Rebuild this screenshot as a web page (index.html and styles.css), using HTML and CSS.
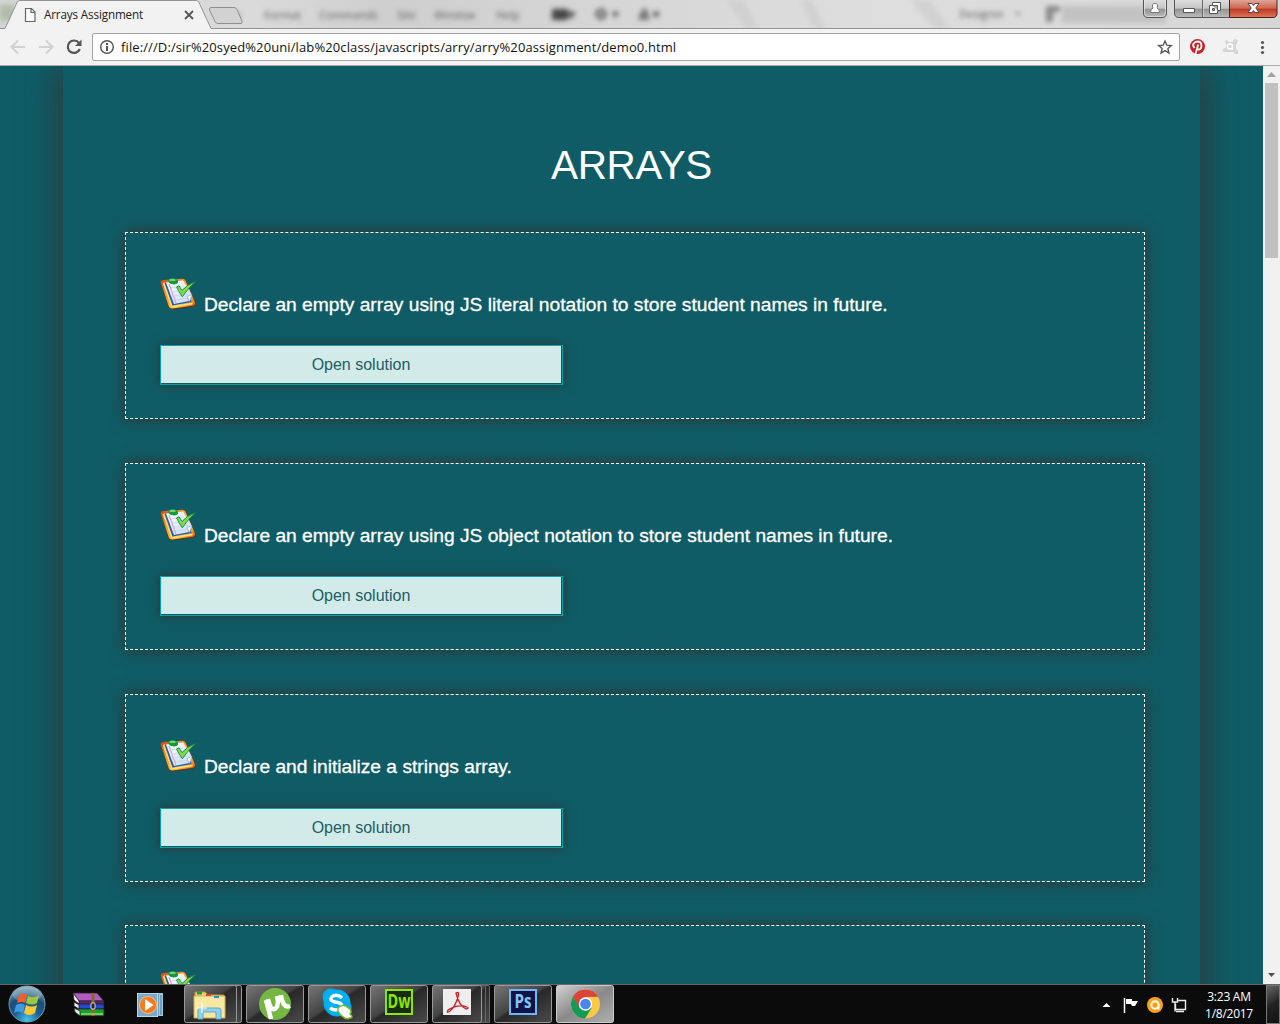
FILE: index.html
```html
<!DOCTYPE html>
<html lang="en">
<head>
<meta charset="utf-8">
<title>Arrays Assignment</title>
<link rel="stylesheet" href="styles.css">
</head>
<body>
<svg class="defs" width="0" height="0">
  <defs>
    <linearGradient id="board" x1="0" y1="0" x2="1" y2="1"><stop offset="0" stop-color="#d93c12"/><stop offset=".3" stop-color="#f78a1c"/><stop offset=".7" stop-color="#ffc63d"/><stop offset="1" stop-color="#d9480f"/></linearGradient>
    <linearGradient id="sheet" x1="0" y1="0" x2="1" y2="1"><stop offset="0" stop-color="#fff"/><stop offset="1" stop-color="#c3d9f8"/></linearGradient>
    <radialGradient id="orb" cx=".5" cy=".95" r=".9"><stop offset="0" stop-color="#42c8f0"/><stop offset=".4" stop-color="#1d5f95"/><stop offset=".7" stop-color="#1c4d75"/><stop offset="1" stop-color="#7aa6bd"/></radialGradient>
    <symbol id="clip" viewBox="0 0 36 34">
      <path d="M1 6.500Q0 4 3 3.500L22 2Q25 1 26 4L35.500 26Q36 29 33.500 29.500L13 32.500Q10 33 8.500 30Z" fill="#6b2a12"/>
      <path d="M.8 5.800Q0 3.700 3 3L22 1.700Q24.500 1.300 25.500 3.500L35 25.500Q35.500 28 33 28.700L12.500 31.500Q10 32 8.800 29.500Z" fill="url(#board)"/>
      <path d="M2.800 6.500L5 5L12.500 29L33 25.500L32 27.500L11.500 30.500Z" fill="#ffe27a"/>
      <path d="M4.500 6L22 3.500L31.500 25L12.500 28.500Z" fill="#2358b5"/>
      <path d="M6 5.500L23 3.200L32 18L29.500 24L14 27Z" fill="url(#sheet)"/>
      <path d="M9 7L16 26" stroke="#dc9be9" stroke-width="1.200"/>
      <path d="M11 11L23 9M12.500 15L26 13M14 19L28 17M15.500 23L28 21" stroke="#bccdf0" stroke-width=".6"/>
      <path d="M27 19.500L32 17.500L29.500 24.500Z" fill="#fff" stroke="#789ed4" stroke-width=".6"/>
      <ellipse cx="13.200" cy="4.300" rx="5" ry="3.100" fill="#18983d" transform="rotate(8 13.200 4.300)"/><ellipse cx="12.500" cy="2.900" rx="3.200" ry="1.200" fill="#6bd873"/>
      <path d="M16.500 10L19 8.800L22 13.500Q27 7.500 35.500 4.800Q28 11 22.300 19.800Q19 15 16.500 10Z" fill="#7bdc4c" stroke="#15883a" stroke-width=".9"/>
    </symbol>
  </defs>
</svg>
<div class="screen">
  <header class="browser">
    <div class="titlebar">
      <svg class="glass" width="1280" height="29" viewBox="0 0 1280 29">
        <defs>
          <linearGradient id="gl" x1="0" x2="1"><stop offset="0" stop-color="#d3d5d3"/><stop offset=".2" stop-color="#dadada"/><stop offset=".3" stop-color="#cfcfcf"/><stop offset=".58" stop-color="#dadada"/><stop offset=".7" stop-color="#dedede"/><stop offset="1" stop-color="#d6d6d6"/></linearGradient>
          <filter id="soft" x="-20%" y="-80%" width="140%" height="260%"><feGaussianBlur stdDeviation="2.500"/></filter>
          <linearGradient id="btn" x2="0" y2="1"><stop offset="0" stop-color="#ddd"/><stop offset=".48" stop-color="#c4c4c4"/><stop offset=".5" stop-color="#929292"/><stop offset="1" stop-color="#bdbdbd"/></linearGradient>
          <linearGradient id="closer" x2="0" y2="1"><stop offset="0" stop-color="#e0a596"/><stop offset=".48" stop-color="#cf6450"/><stop offset=".5" stop-color="#b93620"/><stop offset="1" stop-color="#df7857"/></linearGradient>
        </defs>
        <path fill="url(#gl)" d="M0 0H1280V29H0z"/>
        <g filter="url(#soft)">
          <path d="M726 0H744L758 29H746zM800 0H812L826 29H814zM910 0H930L950 29H935z" fill="#c9c9c9" opacity=".6"/>
          <path d="M0 5H14V20H0z" fill="#adbca9"/>
          <g class="ghost"><text x="232" y="19">rt</text><text x="264" y="19">Format</text><text x="319" y="19">Commands</text><text x="397" y="19">Site</text><text x="434" y="19">Window</text><text x="496" y="19">Help</text><text x="959" y="18">Designer</text></g>
          <path d="M552 9H568V20H552zM567 12H576L571 19zM612 12H619L615 18zM652 12H660L656 18z" fill="#444"/><path d="M1015 12H1021L1018 17z" fill="#999"/>
          <circle cx="601" cy="14" r="4" fill="none" stroke="#666" stroke-width="3.500"/><path d="M638 20Q641 8 645 8Q647 8 650 20z" fill="#777"/>
          <path d="M1046 6H1060V12H1053V22H1046z" fill="#888"/><path d="M1062 6H1166V23H1062z" fill="#c2c2c2"/>
        </g>
        <path d="M0 28.500H5L17 2.500Q18 .5 20 .5H196Q198 .5 199 2.500L211 28.500H1280" fill="none" stroke="#949494"/>
        <path d="M5.500 29L17.500 3Q18 1 20 1H196Q198 1 198.500 3L210.500 29z" fill="#f2f2f2"/>
        <path d="M211 7.500H234Q236 7.500 237 9.500L242 21Q242.500 23.500 241 23.500H218Q216 23.500 215 21.500L209.500 10Q209 7.500 211 7.500z" fill="#d2d2d2" stroke="#8e8e8e"/>
        <path d="M25.500 8.500H31.500L35 12V21.500H25.500zM31 8.500V12.500H35" fill="#fafafa" stroke="#666" stroke-width="1.200"/>
        <path d="M185 11L193 19M193 11L185 19" stroke="#555" stroke-width="1.800"/>
        <path d="M1143.500 0V13Q1143.500 17.500 1148 17.500H1162Q1166.500 17.500 1166.500 13V0" fill="url(#btn)" stroke="#555"/>
        <path d="M1144.500 0V13Q1144.500 16.500 1148 16.500H1162Q1165.500 16.500 1165.500 13V0" fill="none" stroke="#eee" opacity=".6"/>
        <path d="M1174.500 0V13Q1174.500 17.500 1179 17.500H1229.500V0" fill="url(#btn)" stroke="#555"/>
        <path d="M1229.500 0V17.500H1273Q1277 17.500 1277 13V0" fill="url(#closer)" stroke="#50201a"/>
        <path d="M1202.500 0V17" stroke="#666"/><path d="M1203.500 0V17" stroke="#ddd" opacity=".6"/>
        <path d="M1150.500 12.500Q1150.500 8.500 1153 8Q1151 3.500 1155 3.500Q1159 3.500 1157 8Q1159.500 8.500 1159.500 12.500z" fill="#fff" stroke="#777"/>
        <path d="M1183.500 8.500H1194.500V12.500H1183.500z" fill="#fff" stroke="#555"/>
        <path d="M1212.500 2.500H1220.500V10.500H1217.500V13.500H1209.500V5.500H1212.500z" fill="#fff" stroke="#555"/><path d="M1212.500 8.500H1214.500V10.500H1212.500zM1212 5.500H1217.500V10" fill="#aaa" stroke="#555"/>
        <path d="M1248 3.500H1252L1253.500 5.500L1255 3.500H1259L1255.800 8L1259 12.500H1255L1253.500 10.500L1252 12.500H1248L1251.200 8z" fill="#fff" stroke="#574344"/>
      </svg>
      <span class="tab-title">Arrays Assignment</span>
    </div>
    <div class="toolbar">
      <svg class="nav" width="92" height="36" viewBox="0 29 92 36"><path d="M25 47H12M18 40.500L11.500 47L18 53.500M39 47H52M46 40.500L52.500 47L46 53.500" fill="none" stroke="#d2d2d2" stroke-width="2"/><path d="M79 43A6.200 6.200 0 1 0 79.800 49" fill="none" stroke="#555" stroke-width="2.200"/><path d="M81.500 39.500V46H75z" fill="#555"/></svg>
      <div class="address">
        <svg width="28" height="26" viewBox="93 34 28 26"><circle cx="107" cy="47" r="6.300" fill="none" stroke="#555" stroke-width="1.400"/><path d="M106 46H108V51H106zM106 43H108V45H106z" fill="#555"/></svg>
        <span class="url">file:///D:/sir%20syed%20uni/lab%20class/javascripts/arry/arry%20assignment/demo0.html</span>
        <svg class="star" width="28" height="26" viewBox="1151 34 28 26"><path d="M1165 41L1166.800 45.200L1171.300 45.600L1167.900 48.500L1168.900 53L1165 50.600L1161.100 53L1162.100 48.500L1158.700 45.600L1163.200 45.200z" fill="none" stroke="#555" stroke-width="1.400"/></svg>
      </div>
      <svg width="100" height="36" viewBox="1180 29 100 36"><circle cx="1197.500" cy="46.500" r="7.500" fill="#cb2027"/><path d="M1194.500 48C1191 44 1195 41.500 1198 41.500C1203 42 1202 49.500 1198.500 49.500Q1197 49.500 1197 48M1198.200 44.500L1195.500 54" fill="none" stroke="#fff" stroke-width="1.800"/><path d="M1225 41Q1227 39 1229 42L1233 42Q1233 39 1236 39Q1239 40 1237 43L1236 45V49Q1239 51 1238 54Q1235 55 1233 52H1225Q1221 52 1223 49L1227 47z" fill="#d5d5d5"/><circle cx="1230" cy="46.500" r="2.500" fill="none" stroke="#fff" stroke-width="1.500"/><path d="M1232.500 44V50" stroke="#fff" stroke-width="1.200"/><g fill="#555"><circle cx="1262.500" cy="42.500" r="1.600"/><circle cx="1262.500" cy="47.500" r="1.600"/><circle cx="1262.500" cy="52.500" r="1.600"/></g></svg>
    </div>
  </header>
  <main class="viewport">
    <div class="page">
      <section class="container">
        <h1>ARRAYS</h1>
        <article class="card"><div class="question"><svg width="36" height="34"><use href="#clip"/></svg><p>Declare an empty array using JS literal notation to store student names in future.</p></div><button>Open solution</button></article>
        <article class="card"><div class="question"><svg width="36" height="34"><use href="#clip"/></svg><p>Declare an empty array using JS object notation to store student names in future.</p></div><button>Open solution</button></article>
        <article class="card tall"><div class="question"><svg width="36" height="34"><use href="#clip"/></svg><p>Declare and initialize a strings array.</p></div><button>Open solution</button></article>
        <article class="card"><div class="question"><svg width="36" height="34"><use href="#clip"/></svg></div></article>
      </section>
    </div>
    <div class="scrollbar"><svg width="17" height="17"><path d="M4 11L8.500 6L13 11z" fill="#a3a3a3"/></svg><i></i><svg width="17" height="17"><path d="M5 6H12L8.500 10z" fill="#505050"/></svg></div>
  </main>
  <footer class="taskbar">
    <svg width="1190" height="40" viewBox="0 984 1190 40">
      <defs><linearGradient id="task" x2="1" y2="1"><stop offset="0" stop-color="#777"/><stop offset=".45" stop-color="#444"/><stop offset=".5" stop-color="#282828"/><stop offset="1" stop-color="#4b4b4b"/></linearGradient><linearGradient id="active" x2="1" y2="1"><stop offset="0" stop-color="#d2d2d2"/><stop offset=".5" stop-color="#898989"/><stop offset="1" stop-color="#b0b0b0"/></linearGradient></defs>
      <g fill="url(#task)" stroke="#999"><rect x="188.500" y="985.500" width="53" height="37" rx="2"/><rect x="184.500" y="985.500" width="52" height="37" rx="2"/><rect x="246.500" y="985.500" width="57" height="37" rx="2"/><rect x="308.500" y="985.500" width="57" height="37" rx="2"/><rect x="370.500" y="985.500" width="57" height="37" rx="2"/><path d="M440 985.500H488Q489.500 985.500 489.500 987V1022.500H440zM440 985.500H485.500V1022.500H440z" stroke="#666"/><rect x="432.500" y="985.500" width="49" height="37" rx="2"/><rect x="494.500" y="985.500" width="57" height="37" rx="2"/><rect x="556.500" y="985.500" width="57" height="37" rx="2" fill="url(#active)" stroke="#ccc"/></g>
      <circle cx="27" cy="1004" r="18" fill="url(#orb)" stroke="#6b9fba"/><ellipse cx="27" cy="994" rx="15" ry="8" fill="#bfd6e0" opacity=".3"/>
      <path d="M19 995Q23 992 27 995L25 1003Q21 1001 17 1003z" fill="#f0602b"/><path d="M28 996Q34 999 39 995L37 1003Q32 1006 26 1003z" fill="#9cc83d"/><path d="M16 1005Q21 1002 25 1005L23 1013Q18 1010 14 1013z" fill="#3f9be1"/><path d="M26 1005Q32 1008 37 1005L35 1013Q29 1017 24 1013z" fill="#fbc931"/>
      <g stroke="#222" stroke-width=".8"><path d="M73 993L97 993L104 1001H79z" fill="#b15ac3"/><path d="M79 1001H104V1004H79z" fill="#68256e"/><path d="M73 993L79 1001V1004L74 1000z" fill="#fff"/><path d="M76 1003L79 1004H104V1009H80L76 1006z" fill="#2648d5"/><path d="M76 1009H104V1016H80L75 1012z" fill="#15a32e"/><path d="M74 1002L79 1005V1009L74 1006zM74 1008L80 1011V1016L75 1012z" fill="#eee"/></g><path d="M91.500 993H94.500V1016H91.500z" fill="#8d682a"/><rect x="91" y="1003" width="4" height="6" rx="1" fill="#222" stroke="#ddd"/><path d="M81 1014H103" stroke="#efe38a"/>
      <path d="M142 993H163V1016H142z" fill="#9dcae4"/><path d="M158 994V1016M161 995V1015" stroke="#49768f"/><rect x="137.500" y="993.500" width="20" height="23" fill="#78abcb" stroke="#b1d8ed"/><circle cx="148" cy="1005" r="8.500" fill="#f47920" stroke="#ffbd74"/><path d="M145 999L153.500 1005L145 1011z" fill="#fff"/>
      <path d="M195 992H205L208 995H224V1017H195z" fill="#f2d36d" stroke="#bd9239"/><path d="M194 996H225V1018H194z" fill="#f9e8a1" stroke="#d0ae54"/><path d="M197 993H202" stroke="#159e43" stroke-width="3"/><path d="M206 995H211" stroke="#d34b30" stroke-width="2"/><path d="M214 997H219" stroke="#278fcd" stroke-width="2"/><path d="M198 1019V1010Q198 1008 201 1008H218Q221 1008 221 1010V1019H216V1012H203V1019z" fill="#90d3ec" stroke="#5aa9ca"/><path d="M197 1008H207M202 1003V1013" stroke="#fff" stroke-width="1.200"/>
      <circle cx="275" cy="1004" r="16" fill="#74b843"/><path d="M266 1000L271 1019M268 999Q271 1013 276 1008Q279 1005 277 996M281 995Q283 1009 290 1006" fill="none" stroke="#fff" stroke-width="4.500"/>
      <circle cx="331" cy="997" r="8.500" fill="#00aff0"/><circle cx="343" cy="1008" r="8.500" fill="#00aff0"/><circle cx="337" cy="1003" r="13.500" fill="#00aff0"/><path d="M342 998Q338 994 333 996Q328 1000 335 1002Q344 1003 341 1008Q336 1012 330 1008" fill="none" stroke="#fff" stroke-width="3.500"/><path d="M338 1008Q343 1003 347 1007Q353 1010 350 1014Q354 1018 350 1018Q346 1020 342 1016Q337 1012 338 1008z" fill="#fff" stroke="#7fba2a" stroke-width="1.500"/>
      <rect x="386" y="990" width="26" height="24" fill="#182c10" stroke="#8be600" stroke-width="2"/><text class="app" x="387.500" y="1008" fill="#8be600" textLength="23" lengthAdjust="spacingAndGlyphs">Dw</text>
      <rect x="443" y="989" width="28" height="26" fill="#eee"/><path d="M456 993Q460 991 458 997Q455 1007 450 1011Q446 1014 448 1010Q455 1005 464 1006Q471 1008 466 1009Q459 1006 456 993z" fill="none" stroke="#c92027" stroke-width="1.300"/>
      <rect x="510" y="990" width="26" height="24" fill="#10134a" stroke="#6eb7f2" stroke-width="2"/><text class="app" x="514.500" y="1008" fill="#83c4f5" textLength="17" lengthAdjust="spacingAndGlyphs">Ps</text>
      <circle cx="585.500" cy="1004" r="14.500" fill="#fbc845"/><path d="M572.900 996.800A14.500 14.500 0 0 1 598.100 996.800L585.500 997L579 1008z" fill="#dc4437"/><path d="M572.900 996.800A14.500 14.500 0 0 0 585 1018.500L592 1007.500L579.500 1007.500z" fill="#149b59"/><circle cx="585.500" cy="1004" r="6.700" fill="#fff"/><circle cx="585.500" cy="1004" r="5.300" fill="#4687ed"/>
      <path d="M1102.500 1007L1106.500 1003L1110.500 1007z" fill="#fff"/><path d="M1124.500 998V1013" stroke="#fff" stroke-width="1.500"/><path d="M1126 999H1132V1001H1138L1135 1006H1132L1131 1004H1126z" fill="#fff"/><circle cx="1155" cy="1005" r="8" fill="#ff9f17"/><circle cx="1155" cy="1005" r="3.700" fill="none" stroke="#fff" stroke-width="2"/><path d="M1158.500 1004V1009.500" stroke="#fff" stroke-width="2"/><path d="M1177 1000.500H1185.500V1009.500H1175.500V1004M1172.500 998V1002H1177.500V998M1175 1002V1011.500M1176 1011.500H1184" fill="none" stroke="#eee" stroke-width="1.400"/>
    </svg>
    <div class="clock"><span>3:23 AM</span><span>1/8/2017</span></div><div class="peek"></div>
  </footer>
</div>
</body>
</html>
```
FILE: styles.css
```css
* { box-sizing: border-box; }
body { margin: 0; overflow: hidden; font-family: "Liberation Sans", Arial, sans-serif; }
svg { display: block; flex: none; }
.defs { position: absolute; }
.screen { width: 1280px; height: 1024px; display: flex; flex-direction: column; overflow: hidden; }
.browser { height: 66px; flex: none; background: #f2f2f2; border-bottom: 1px solid #aaa; font-family: "Open Sans", "Noto Sans", sans-serif; }
.titlebar { height: 29px; display: grid; }
.titlebar > * { grid-area: 1 / 1; }
.tab-title { z-index: 1; padding-left: 44px; font-size: 11.7px; line-height: 29px; color: #222; letter-spacing: -.15px; }
.ghost { font: 11px "Open Sans", sans-serif; fill: #555; }
.toolbar { height: 36px; display: flex; }
.address { width: 1088px; height: 28px; margin-top: 4px; background: #fff; border: 1px solid #a5a5a5; border-radius: 2px; display: flex; }
.url { flex: 1; font-size: 13px; letter-spacing: .11px; line-height: 27px; white-space: nowrap; color: #111; }
.viewport { height: 918px; flex: none; display: flex; background: #0f5c66; overflow: hidden; }
.page { width: 1263px; flex: none; padding-left: 63px; overflow: hidden; }
.container { width: 1137px; height: 1100px; padding: 76px 55px 0 62px; box-shadow: 0 0 35px #333; display: flow-root; }
h1 { margin: 0 0 44px; height: 46px; line-height: 46px; font-size: 40.5px; letter-spacing: -.45px; font-weight: 400; color: #fff; text-align: center; padding-right: 7px; }
.card { height: 187px; margin-bottom: 44px; padding: 44px 34px; border: 1px dashed #fff; box-shadow: 0 0 15px #333; }
.card.tall { height: 188px; margin-bottom: 43px; }
.question { height: 68px; display: flex; gap: 8px; }
.tall .question { height: 69px; }
.question p { margin: 16px 0 0; font-size: 19.2px; line-height: 24px; color: #fff; white-space: nowrap; -webkit-text-stroke: .3px #fff; }
.card button { display: block; width: 403px; height: 40px; padding: 0 1px 0 0; border: 1px solid #00a3a8; border-radius: 0; background: #d2ebe9; color: #1d5d66; font: 16px "Liberation Sans", Arial, sans-serif; box-shadow: inset -1px -1px #0f5c66, 0 0 10px #333; }
.scrollbar { width: 17px; background: #f1f1f1; display: flex; flex-direction: column; }
.scrollbar i { width: 13px; height: 175px; margin: 0 2px auto; background: #c1c1c1; }
.taskbar { height: 40px; display: flex; background: #0b0b0b; border-top: 1px solid #666; overflow: hidden; }
.taskbar > svg { margin-top: -1px; }
.app { font: bold 19px "Open Sans", sans-serif; }
.clock { width: 76px; padding: 3px 0 0; display: flex; flex-direction: column; align-items: center; color: #fff; font: 12px/17px "Open Sans", sans-serif; letter-spacing: -.25px; }
.clock span { padding-left: 2px; }
.peek { width: 14px; height: 39px; border: 1px solid #777; background: linear-gradient(150deg, #666, #222 50%, #111); }
```
